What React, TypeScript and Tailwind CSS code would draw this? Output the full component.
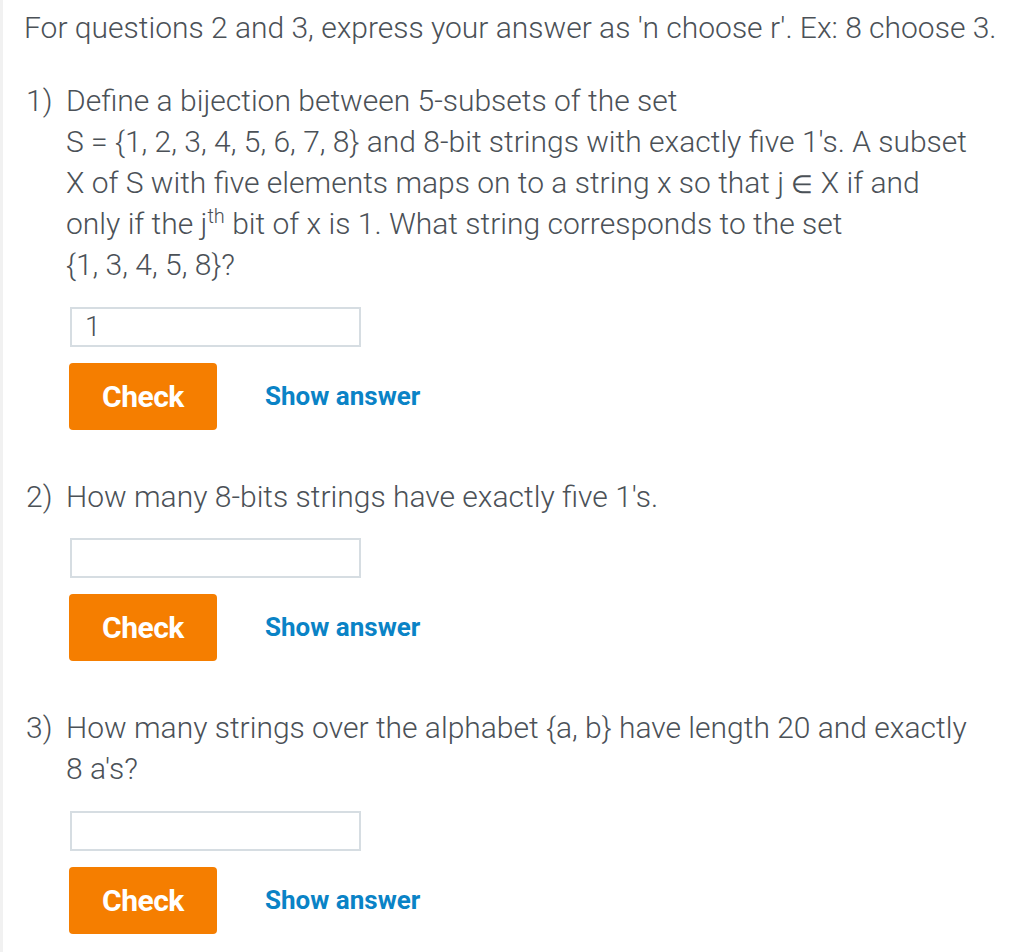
import React from 'react';

type Question = {
  num: string;
  body: React.ReactNode;
  value?: string;
};

const questions: Question[] = [
  {
    num: '1)',
    body: (
      <>
        Define a bijection between 5-subsets of the set
        <br />
        S = &#123;1, 2, 3, 4, 5, 6, 7, 8&#125; and 8-bit strings with exactly five 1's. A subset
        <br />
        X of S with five elements maps on to a string x so that j <span className="text-[25px] leading-[0]">∈</span> X if and
        <br />
        only if the j<span className="relative top-[-11px] text-[20px] leading-[0]">th</span> bit of x is 1. What string
        corresponds to the set
        <br />
        &#123;1, 3, 4, 5, 8&#125;?
      </>
    ),
    value: '1',
  },
  {
    num: '2)',
    body: <>How many 8-bits strings have exactly five 1's.</>,
  },
  {
    num: '3)',
    body: (
      <>
        How many strings over the alphabet &#123;a, b&#125; have length 20 and exactly
        <br />8 a's?
      </>
    ),
  },
];

function QuestionBlock({ q }: { q: Question }) {
  return (
    <div className="flex">
      <div className="w-[42px] shrink-0 pl-[2px]">{q.num}</div>
      <div className="flex-1">
        <p className="m-0 whitespace-nowrap">{q.body}</p>
        <div className="mt-[20px] ml-[4px]">
          <input
            readOnly
            value={q.value ?? ''}
            className="w-[291px] h-[40px] border-2 border-[#d6dde2] px-[13px] text-[28px] text-[#4b5157] outline-none bg-white"
          />
        </div>
        <div className="mt-[16px] ml-[3px] flex items-center gap-[48px]">
          <button className="w-[148px] h-[67px] rounded-[4px] bg-[#f57e00] text-white font-bold text-[30px] tracking-[-0.5px]">
            Check
          </button>
          <button className="text-[#0a83c6] font-bold text-[26px]">Show answer</button>
        </div>
      </div>
    </div>
  );
}

export default function App() {
  return (
    <div
      className="min-h-[952px] w-[1024px] bg-white border-l-[3px] border-[#f1f1f1] text-[#4b5157] text-[30px] leading-[41px] font-light"
      style={{ fontFamily: 'Roboto, "Liberation Sans", sans-serif' }}
    >
      <div className="pl-[21px] pt-[7px]">
        <p className="m-0">For questions 2 and 3, express your answer as 'n choose r'. Ex: 8 choose 3.</p>
        <div className="mt-[32px] flex flex-col gap-[46px]">
          {questions.map((q) => (
            <QuestionBlock key={q.num} q={q} />
          ))}
        </div>
      </div>
    </div>
  );
}
